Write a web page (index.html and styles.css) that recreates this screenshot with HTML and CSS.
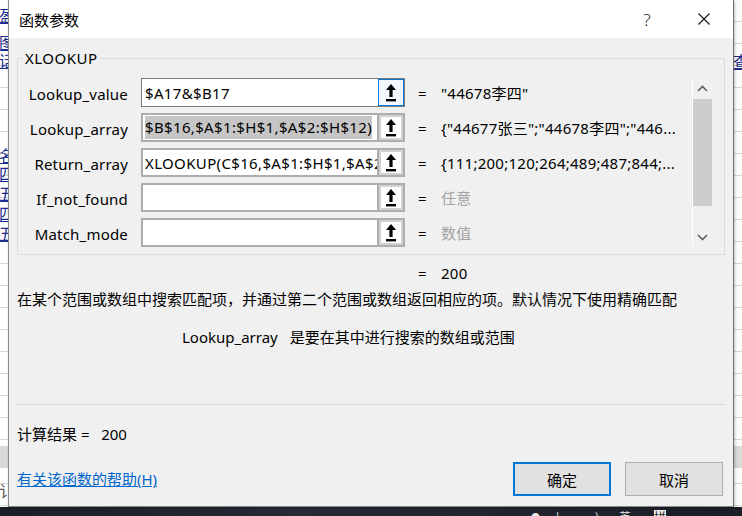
FILE: index.html
```html
<!DOCTYPE html>
<html lang="zh-CN">
<head>
<meta charset="utf-8">
<title>函数参数</title>
<link rel="stylesheet" href="styles.css">
</head>
<body>
<div class="desktop">
  <div class="sheet">
    <div class="band"></div>
    <span class="bg-link l1">盈</span>
    <span class="bg-link l2">图</span>
    <span class="bg-link l3">话</span>
    <span class="bg-link l4">名</span>
    <span class="bg-link l5">四</span>
    <span class="bg-link l6">五</span>
    <span class="bg-link l7">四</span>
    <span class="bg-link l8">五</span>
    <span class="bg-link r1">查</span>
    <span class="bg-plain l9">讠</span>
  </div>
  <div class="taskbar">
    <span class="tray t1">●</span>
    <span class="tray t2">|</span>
    <span class="tray t3">◂)</span>
    <span class="tray t4">英</span>
    <span class="tray t5">拼</span>
  </div>

  <div class="dialog">
    <div class="titlebar">
      <span class="title">函数参数</span>
      <span class="cap cap-help">?</span>
      <span class="cap cap-close">
        <svg width="12" height="12" viewBox="0 0 12 12"><path d="M0.5 0.5 L11.5 11.5 M11.5 0.5 L0.5 11.5" stroke="#111" stroke-width="1.1" fill="none"/></svg>
      </span>
    </div>

    <div class="content">
      <fieldset class="group">
        <legend>XLOOKUP</legend>
        <div class="args">
          <div class="rows">
            <div class="row">
              <span class="lbl">Lookup_value</span>
              <div class="field focus">
                <span class="input">$A17&amp;$B17</span>
                <span class="pick"><svg width="10" height="18" viewBox="0 0 10 18"><path d="M5 0 L10 6 H6.6 V13 H3.4 V6 H0 Z" fill="#000"/><rect x="0" y="15" width="10" height="2.4" fill="#000"/></svg></span>
              </div>
              <span class="eq">=</span>
              <span class="val">"44678李四"</span>
            </div>
            <div class="row">
              <span class="lbl">Lookup_array</span>
              <div class="field">
                <span class="input"><span class="sel">$B$16,$A$1:$H$1,$A$2:$H$12)</span></span>
                <span class="pick"><svg width="10" height="18" viewBox="0 0 10 18"><path d="M5 0 L10 6 H6.6 V13 H3.4 V6 H0 Z" fill="#000"/><rect x="0" y="15" width="10" height="2.4" fill="#000"/></svg></span>
              </div>
              <span class="eq">=</span>
              <span class="val">{"44677张三";"44678李四";"446...</span>
            </div>
            <div class="row">
              <span class="lbl">Return_array</span>
              <div class="field">
                <span class="input">XLOOKUP(C$16,$A$1:$H$1,$A$2:$H$12)</span>
                <span class="pick"><svg width="10" height="18" viewBox="0 0 10 18"><path d="M5 0 L10 6 H6.6 V13 H3.4 V6 H0 Z" fill="#000"/><rect x="0" y="15" width="10" height="2.4" fill="#000"/></svg></span>
              </div>
              <span class="eq">=</span>
              <span class="val">{111;200;120;264;489;487;844;...</span>
            </div>
            <div class="row">
              <span class="lbl">If_not_found</span>
              <div class="field">
                <span class="input"></span>
                <span class="pick"><svg width="10" height="18" viewBox="0 0 10 18"><path d="M5 0 L10 6 H6.6 V13 H3.4 V6 H0 Z" fill="#000"/><rect x="0" y="15" width="10" height="2.4" fill="#000"/></svg></span>
              </div>
              <span class="eq">=</span>
              <span class="val hint">任意</span>
            </div>
            <div class="row">
              <span class="lbl">Match_mode</span>
              <div class="field">
                <span class="input"></span>
                <span class="pick"><svg width="10" height="18" viewBox="0 0 10 18"><path d="M5 0 L10 6 H6.6 V13 H3.4 V6 H0 Z" fill="#000"/><rect x="0" y="15" width="10" height="2.4" fill="#000"/></svg></span>
              </div>
              <span class="eq">=</span>
              <span class="val hint">数值</span>
            </div>
          </div>
          <div class="vscroll">
            <span class="sb-btn"><svg width="11" height="7" viewBox="0 0 11 7"><polyline points="1,6 5.5,1.5 10,6" fill="none" stroke="#606060" stroke-width="1.6"/></svg></span>
            <span class="sb-thumb"></span>
            <span class="sb-space"></span>
            <span class="sb-btn"><svg width="11" height="7" viewBox="0 0 11 7"><polyline points="1,1 5.5,5.5 10,1" fill="none" stroke="#606060" stroke-width="1.6"/></svg></span>
          </div>
        </div>
      </fieldset>

      <div class="result-line"><span class="eq">=</span><span class="val">200</span></div>
      <p class="desc">在某个范围或数组中搜索匹配项，并通过第二个范围或数组返回相应的项。默认情况下使用精确匹配</p>
      <p class="argdesc"><span class="argname">Lookup_array</span><span class="argtext">是要在其中进行搜索的数组或范围</span></p>
      <div class="sep"></div>
      <p class="calc">计算结果 =&nbsp;&nbsp; 200</p>
      <div class="footer">
        <a class="help" href="#">有关该函数的帮助(H)</a>
        <div class="buttons">
          <button class="btn primary">确定</button>
          <button class="btn">取消</button>
        </div>
      </div>
    </div>
  </div>
</div>
</body>
</html>
```

FILE: styles.css
```css
html, body {
  margin: 0;
  padding: 0;
}

body {
  width: 742px;
  height: 516px;
  overflow: hidden;
  font-family: "Noto Sans", "Noto Sans CJK SC", sans-serif;
  font-size: 15px;
  color: #000;
}

.desktop {
  position: relative;
  width: 742px;
  height: 516px;
  overflow: hidden;
  background-color: #fff;
  background-image: repeating-linear-gradient(to bottom, transparent 0 21px, #d6d6d6 21px 22px);
}

.sheet .band {
  position: absolute;
  left: 0;
  top: 446px;
  width: 742px;
  height: 22px;
  background: #dadada;
}

.bg-link {
  position: absolute;
  font-family: "Noto Sans CJK SC", sans-serif;
  font-size: 16px;
  line-height: 18px;
  color: #1a2d8f;
  text-decoration: underline;
}

.bg-plain {
  position: absolute;
  font-family: "Noto Sans CJK SC", sans-serif;
  font-size: 16px;
  line-height: 18px;
  color: #555;
}

.l1 { left: -1px; top: 6px; }
.l2 { left: -1px; top: 33px; }
.l3 { left: -1px; top: 51px; }
.l4 { left: -1px; top: 146px; }
.l5 { left: -1px; top: 164px; }
.l6 { left: -1px; top: 184px; }
.l7 { left: -1px; top: 204px; }
.l8 { left: -1px; top: 224px; }
.l9 { left: -1px; top: 481px; }
.r1 { left: 733px; top: 52px; }

.taskbar {
  position: absolute;
  left: 0;
  top: 507px;
  width: 742px;
  height: 9px;
  background: linear-gradient(to right, #1c1f27, #262a36 40%, #1b1e26);
  overflow: hidden;
}

.tray {
  position: absolute;
  top: 3px;
  color: #e6e6e6;
  font-size: 12px;
  line-height: 14px;
  font-family: "Noto Sans CJK SC", sans-serif;
}
.t1 { left: 531px; font-size: 9px; }
.t2 { left: 556px; }
.t3 { left: 589px; }
.t4 { left: 619px; }
.t5 { left: 654px; background: #eee; color: #222; }

/* Dialog window */
.dialog {
  position: absolute;
  left: 8px;
  top: 0;
  width: 726px;
  height: 507px;
  box-sizing: border-box;
  border: 1px solid #8a8a8a;
  border-top: none;
  border-right-color: #6f6f6f;
  background: #f0f0f0;
  box-shadow: 1px 1px 3px rgba(0, 0, 0, 0.25);
  display: flex;
  flex-direction: column;
}

.titlebar {
  height: 38px;
  background: #fff;
  display: flex;
  align-items: center;
  flex: none;
}

.title {
  flex: 1;
  padding-left: 10px;
  font-family: "Noto Sans CJK SC", sans-serif;
  font-size: 15px;
  line-height: 20px;
  padding-top: 1px;
}

.cap {
  width: 24px;
  height: 38px;
  display: flex;
  align-items: center;
  justify-content: center;
}

.cap-help {
  font-size: 17px;
  font-weight: 300;
  color: #222;
}

.cap-close {
  margin-left: 33px;
  margin-right: 17px;
}

.content {
  padding: 0 8px;
  flex: 1;
}

.group {
  margin: 10px 0 0;
  padding: 10px 12px 7px 0;
  border: 1px solid #dcdcdc;
  min-width: 0;
}

.group legend {
  margin-left: 5px;
  padding: 0 2px;
  font-size: 15px;
  line-height: 20px;
  letter-spacing: 0.5px;
}

.args {
  display: flex;
}

.rows {
  flex: 1;
  display: flex;
  flex-direction: column;
  gap: 6px;
  min-width: 0;
}

.row {
  display: flex;
  align-items: center;
  height: 29px;
}

.lbl {
  width: 110px;
  margin-right: 13px;
  text-align: right;
  line-height: 20px;
  padding-top: 2px;
  letter-spacing: 0.2px;
  flex: none;
}

.field {
  display: flex;
  width: 264px;
  height: 29px;
  box-sizing: border-box;
  border: 2px solid #adadad;
  background: #fff;
  flex: none;
}

.field.focus {
  border: 1px solid #7a7a7a;
}

.input {
  flex: 1;
  min-width: 0;
  display: flex;
  align-items: center;
  padding-left: 2px;
  overflow: hidden;
  white-space: nowrap;
  line-height: 20px;
  letter-spacing: 0.35px;
}

.field.focus .input {
  padding-left: 3px;
}

.sel {
  background: #c6c6c6;
  line-height: 23px;
}

.pick {
  width: 26px;
  box-sizing: border-box;
  border-left: 2px solid #adadad;
  background: #fff;
  box-shadow: inset 0 0 0 2px #d2d2d2;
  display: flex;
  align-items: center;
  justify-content: center;
  flex: none;
}

.field.focus .pick {
  border: 1px solid #0078d7;
  background: #f2f8fd;
  box-shadow: none;
}

.eq {
  width: 23px;
  margin-left: 13px;
  flex: none;
  line-height: 20px;
}

.val {
  flex: 1;
  min-width: 0;
  white-space: nowrap;
  overflow: hidden;
  line-height: 20px;
  letter-spacing: 0.25px;
}

.val.hint {
  color: #a3a3a3;
}

.vscroll {
  width: 20px;
  box-sizing: border-box;
  border-left: 1px solid #fff;
  display: flex;
  flex-direction: column;
  flex: none;
}

.sb-btn {
  height: 20px;
  display: flex;
  align-items: center;
  justify-content: center;
  flex: none;
}

.sb-thumb {
  margin-top: 1px;
  height: 107px;
  background: #cdcdcd;
  flex: none;
}

.sb-space {
  flex: 1;
}

.result-line {
  display: flex;
  margin-top: 8px;
  padding-left: 388px;
  line-height: 20px;
}

.result-line .val {
  flex: none;
}

.desc {
  margin: 6px 0 0;
  line-height: 20px;
  white-space: nowrap;
}

.argdesc {
  margin: 18px 0 0;
  padding-left: 165px;
  line-height: 20px;
  display: flex;
}

.argtext {
  margin-left: 12px;
}

.sep {
  margin-top: 57px;
  height: 1px;
  background: #d9d9d9;
}

.calc {
  margin: 19px 0 0;
  line-height: 20px;
}

.footer {
  margin-top: 18px;
  height: 34px;
  display: flex;
  align-items: center;
  justify-content: space-between;
}

.help {
  color: #0066cc;
  text-decoration: underline;
  line-height: 20px;
}

.buttons {
  display: flex;
  gap: 14px;
  margin-right: 2px;
}

.btn {
  width: 98px;
  height: 34px;
  box-sizing: border-box;
  border: 1px solid #adadad;
  background: #e1e1e1;
  font-family: "Noto Sans CJK SC", sans-serif;
  font-size: 15px;
  color: #000;
  padding: 0;
}

.btn.primary {
  border: 2px solid #0078d7;
}
```
